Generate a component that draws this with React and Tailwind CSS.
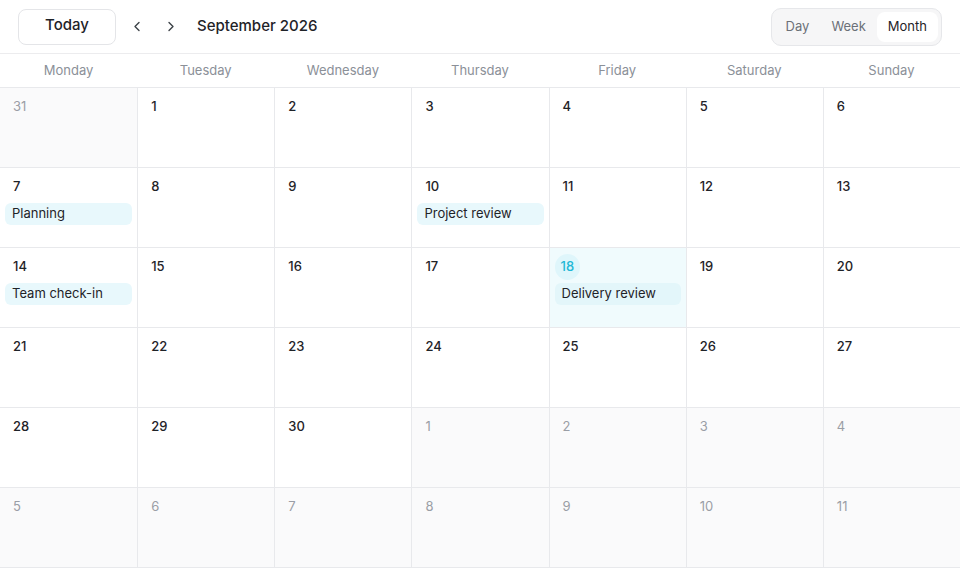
import { ChevronLeft, ChevronRight } from "lucide-react";

const days = ["Monday", "Tuesday", "Wednesday", "Thursday", "Friday", "Saturday", "Sunday"];

// build the 6 week grid starting Mon 31 Aug 2026
const buildCells = () => {
  const cells = [];
  cells.push({ d: 31, out: true });
  for (let i = 1; i <= 30; i++) cells.push({ d: i, out: false });
  for (let i = 1; cells.length < 42; i++) cells.push({ d: i, out: true });
  return cells;
};

const events = {
  7: "Planning",
  10: "Project review",
  14: "Team check-in",
  18: "Delivery review",
};

const App = () => {
  const cells = buildCells();
  const weeks = [];
  for (let i = 0; i < 6; i++) weeks.push(cells.slice(i * 7, i * 7 + 7));

  return (
    <div className="w-[960px] h-[571px] bg-white text-[#1f2328] overflow-hidden" style={{ fontFamily: "Inter, 'Noto Sans', sans-serif" }}>
      {/* toolbar */}
      <div className="h-[54px] flex items-center justify-between pl-[18px] pr-[18px] border-b border-[#ececee]">
        <div className="flex items-center">
          <button className="w-[98px] h-[36px] rounded-lg border border-[#e4e5e8] bg-white text-[15px] font-medium text-[#1f2328] pb-[2px]">
            Today
          </button>
          <button className="ml-[13px] w-[16px] h-[24px] flex items-center justify-center text-[#3a3f45]">
            <ChevronLeft size={17} strokeWidth={2} />
          </button>
          <button className="ml-[18px] w-[16px] h-[24px] flex items-center justify-center text-[#3a3f45]">
            <ChevronRight size={17} strokeWidth={2} />
          </button>
          <div className="ml-[18px] text-[15px] font-medium text-[#1f2328]">September 2026</div>
        </div>
        <div className="h-[38px] flex items-center p-[3px] rounded-[10px] border border-[#e6e7ea] bg-[#f6f6f7]">
          <button className="h-full px-[11px] text-[13px] text-[#6b7078] rounded-lg">Day</button>
          <button className="h-full px-[11px] text-[13px] text-[#6b7078] rounded-lg">Week</button>
          <button className="h-full px-[11px] text-[13px] text-[#1f2328] rounded-lg bg-white">Month</button>
        </div>
      </div>

      {/* weekday names */}
      <div className="grid grid-cols-7 h-[34px] border-b border-[#e8e9ec]">
        {days.map((d) => (
          <div key={d} className="flex items-center justify-center text-[13px] text-[#8b9098]">
            {d}
          </div>
        ))}
      </div>

      {/* weeks */}
      {weeks.map((week, wi) => (
        <div key={wi} className="grid grid-cols-7 h-[80px] border-b border-[#e8e9ec]">
          {week.map((c, ci) => {
            const today = !c.out && c.d === 18;
            const ev = !c.out ? events[c.d] : null;
            return (
              <div
                key={ci}
                className={`px-[5px] pt-[5px] ${ci > 0 ? "border-l border-[#e8e9ec]" : ""} ${
                  c.out ? "bg-[#fafafb]" : today ? "bg-[#f0fbfd]" : "bg-white"
                }`}
              >
                <div
                  className={`h-[26px] inline-flex items-center text-[13px] font-medium ${
                    today
                      ? "px-[6px] rounded-full bg-[#dff6fb] text-[#22b8d6]"
                      : c.out
                      ? "px-2 text-[#9a9ea6] font-normal"
                      : "px-2 text-[#1f2328]"
                  }`}
                >
                  {c.d}
                </div>
                {ev && (
                  <div
                    className={`mt-[3px] h-[22px] flex items-center rounded-md px-[7px] text-[13px] text-[#1f2328] ${
                      today ? "bg-[#e3f6fa]" : "bg-[#e8f8fc]"
                    }`}
                  >
                    {ev}
                  </div>
                )}
              </div>
            );
          })}
        </div>
      ))}
    </div>
  );
};

export default App;
